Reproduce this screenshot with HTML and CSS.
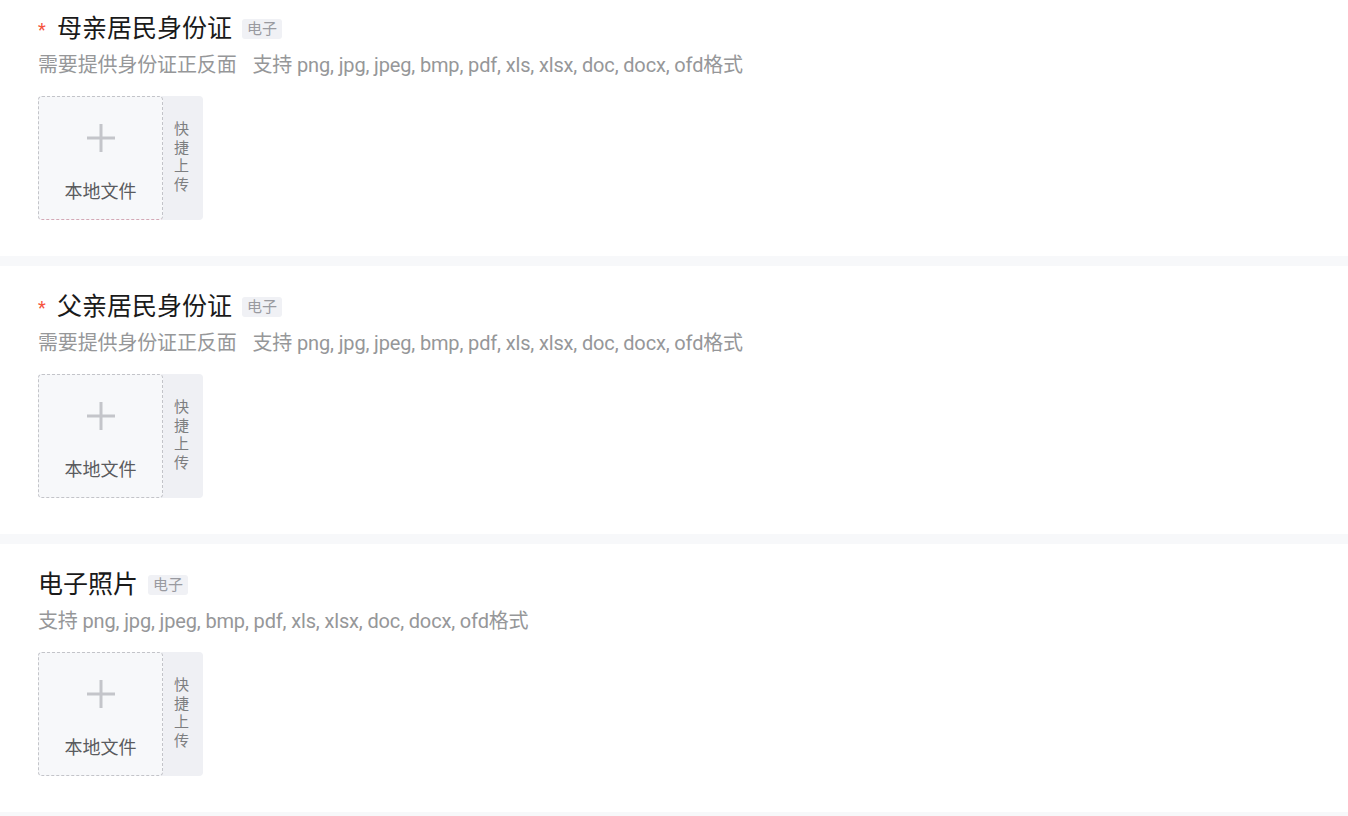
FILE: index.html
```html
<!DOCTYPE html>
<html lang="zh-CN">
<head>
<meta charset="utf-8">
<title>上传材料</title>
<link rel="stylesheet" href="styles.css">
</head>
<body>
<div class="page">
  <section class="field field-first">
    <div class="field-title">
      <span class="required">*</span>
      <span class="title-text">母亲居民身份证</span>
      <span class="tag">电子</span>
    </div>
    <div class="field-desc">需要提供身份证正反面<span class="formats">支持 png, jpg, jpeg, bmp, pdf, xls, xlsx, doc, docx, ofd格式</span></div>
    <div class="uploader">
      <div class="local local-error">
        <svg class="plus" width="28" height="28" viewBox="0 0 28 28"><path d="M14 0V28M0 14H28" stroke="#c4c5ca" stroke-width="3" fill="none"/></svg>
        <span class="local-text">本地文件</span>
      </div>
      <div class="quick"><span>快捷上传</span></div>
    </div>
  </section>
  <section class="field">
    <div class="field-title">
      <span class="required">*</span>
      <span class="title-text">父亲居民身份证</span>
      <span class="tag">电子</span>
    </div>
    <div class="field-desc">需要提供身份证正反面<span class="formats">支持 png, jpg, jpeg, bmp, pdf, xls, xlsx, doc, docx, ofd格式</span></div>
    <div class="uploader">
      <div class="local">
        <svg class="plus" width="28" height="28" viewBox="0 0 28 28"><path d="M14 0V28M0 14H28" stroke="#c4c5ca" stroke-width="3" fill="none"/></svg>
        <span class="local-text">本地文件</span>
      </div>
      <div class="quick"><span>快捷上传</span></div>
    </div>
  </section>
  <section class="field">
    <div class="field-title">
      <span class="title-text">电子照片</span>
      <span class="tag">电子</span>
    </div>
    <div class="field-desc">支持 png, jpg, jpeg, bmp, pdf, xls, xlsx, doc, docx, ofd格式</div>
    <div class="uploader">
      <div class="local">
        <svg class="plus" width="28" height="28" viewBox="0 0 28 28"><path d="M14 0V28M0 14H28" stroke="#c4c5ca" stroke-width="3" fill="none"/></svg>
        <span class="local-text">本地文件</span>
      </div>
      <div class="quick"><span>快捷上传</span></div>
    </div>
  </section>
</div>
</body>
</html>
```

FILE: styles.css
```css
html, body {
  margin: 0;
  padding: 0;
  background: #f7f8fa;
}
body {
  font-family: Roboto, "Noto Sans CJK SC", sans-serif;
  color: #1f1f1f;
}
.page {
  display: flex;
  flex-direction: column;
  gap: 10px;
  padding-bottom: 10px;
}
.field {
  background: #ffffff;
  padding: 24px 38px 36px;
}
.field-first {
  padding-top: 12px;
}
.field-title {
  display: flex;
  align-items: center;
  height: 34px;
}
.required {
  color: #f5533d;
  font-size: 18px;
  width: 19px;
  margin-top: 2px;
  line-height: 1;
}
.title-text {
  font-size: 25px;
  line-height: 34px;
  color: #1a1a1a;
}
.tag {
  margin-left: 10px;
  height: 20px;
  line-height: 20px;
  padding: 0 5px;
  background: #f0f1f5;
  border-radius: 3px;
  color: #999aa0;
  font-size: 15px;
}
.field-desc {
  margin-top: 5px;
  font-size: 20px;
  line-height: 28px;
  color: #969799;
  white-space: nowrap;
  letter-spacing: -0.15px;
}
.formats {
  margin-left: 16px;
}
.uploader {
  margin-top: 17px;
  display: flex;
  width: 165px;
  height: 124px;
  background: #eff0f4;
  border-radius: 4px;
}
.local {
  box-sizing: border-box;
  width: 125px;
  height: 124px;
  border: 1px dashed #c3c4c9;
  border-radius: 4px;
  background: #f7f8fa;
  display: flex;
  flex-direction: column;
  align-items: center;
  padding-top: 27px;
}
.local-error {
  border-bottom-color: #d4a9b6;
}
.local-text {
  margin-top: 28px;
  font-size: 18px;
  line-height: 24px;
  color: #5a5b5e;
}
.quick {
  flex: 1;
  display: flex;
  align-items: center;
  justify-content: center;
  padding-right: 3px;
  padding-bottom: 2px;
}
.quick span {
  width: 15px;
  font-size: 15px;
  line-height: 18.5px;
  color: #7d7e80;
  word-break: break-all;
}
```
